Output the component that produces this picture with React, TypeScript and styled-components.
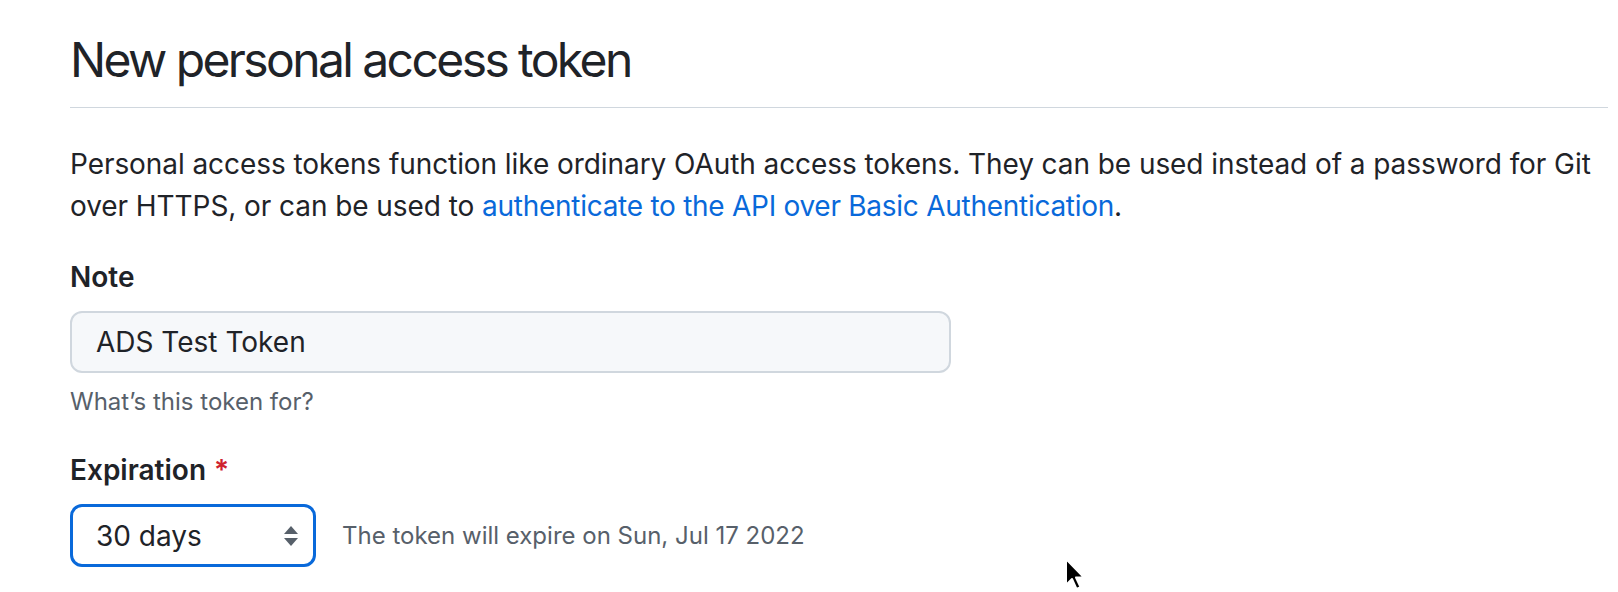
import React from "react";
import styled, { createGlobalStyle } from "styled-components";

const Global = createGlobalStyle`
  html, body { margin: 0; padding: 0; background: #ffffff; }
  body { font-family: Inter, "Noto Sans", "Liberation Sans", sans-serif; color: #1f2328; }
`;

const Page = styled.div`
  position: relative;
  width: 1618px;
  height: 592px;
  overflow: hidden;
  box-sizing: border-box;
  padding: 30px 10px 0 70px;
`;

const Subhead = styled.div`
  border-bottom: 1px solid #d0d7de;
  height: 78px;
  box-sizing: border-box;
`;

const Title = styled.h1`
  margin: 0;
  font-size: 48px;
  line-height: 60px;
  font-weight: 400;
  letter-spacing: -2.6px;
  color: #1f2328;
`;

const Intro = styled.p`
  margin: 35px 0 0;
  font-size: 28px;
  line-height: 42px;
  letter-spacing: -0.07px;
  color: #1f2328;
`;

const Link = styled.a`
  color: #0969da;
  text-decoration: none;
  letter-spacing: -0.27px;
`;

const FieldGroup = styled.div<{ $top: number }>`
  margin-top: ${(p) => p.$top}px;
  display: flex;
  flex-direction: column;
`;

const Label = styled.label`
  font-size: 28px;
  line-height: 40px;
  font-weight: 600;
  color: #1f2328;
`;

const Required = styled.span`
  color: #cf222e;
  margin-left: 8px;
`;

const TextInput = styled.div`
  margin-top: 14px;
  width: 881px;
  height: 62px;
  box-sizing: border-box;
  border: 2px solid #d0d7de;
  border-radius: 12px;
  background: #f6f8fa;
  display: flex;
  align-items: center;
  padding-left: 24px;
  font-size: 28px;
  color: #1f2328;
`;

const Hint = styled.div`
  margin-top: 11px;
  font-size: 24px;
  line-height: 36px;
  color: #57606a;
`;

const SelectRow = styled.div`
  margin-top: 14px;
  display: flex;
  align-items: center;
  gap: 26px;
`;

const Select = styled.div`
  width: 246px;
  height: 63px;
  box-sizing: border-box;
  border: 3px solid #0969da;
  border-radius: 12px;
  background: #ffffff;
  display: flex;
  align-items: center;
  justify-content: space-between;
  padding: 0 14px 0 23px;
  font-size: 28px;
  color: #1f2328;
`;

const Note = styled.span`
  font-size: 24px;
  color: #57606a;
`;

const Cursor = styled.svg`
  position: absolute;
  left: 1064px;
  top: 557px;
`;

export default function App() {
  return (
    <>
      <Global />
      <Page>
        <Subhead>
          <Title>New personal access token</Title>
        </Subhead>
        <Intro>
          Personal access tokens function like ordinary OAuth access tokens. They can be used instead of a password for Git over HTTPS, or can be used to{" "}
          <Link href="#">authenticate to the API over Basic Authentication</Link>.
        </Intro>
        <FieldGroup $top={30}>
          <Label>Note</Label>
          <TextInput>ADS Test Token</TextInput>
          <Hint>What’s this token for?</Hint>
        </FieldGroup>
        <FieldGroup $top={30}>
          <Label>
            Expiration<Required>*</Required>
          </Label>
          <SelectRow>
            <Select>
              <span>30 days</span>
              <svg width="16" height="24" viewBox="0 0 16 24">
                <path d="M8 2 L15 10 L1 10 Z" fill="#57606a" />
                <path d="M8 22 L15 14 L1 14 Z" fill="#57606a" />
              </svg>
            </Select>
            <Note>The token will expire on Sun, Jul 17 2022</Note>
          </SelectRow>
        </FieldGroup>
        <Cursor width="24" height="36" viewBox="0 0 24 36">
          <path d="M2 2 L2 28 L8 22 L12.5 32 L16.5 30.2 L12 20.5 L20 20.5 Z" fill="#000" stroke="#fff" strokeWidth="2" strokeLinejoin="round" />
        </Cursor>
      </Page>
    </>
  );
}
